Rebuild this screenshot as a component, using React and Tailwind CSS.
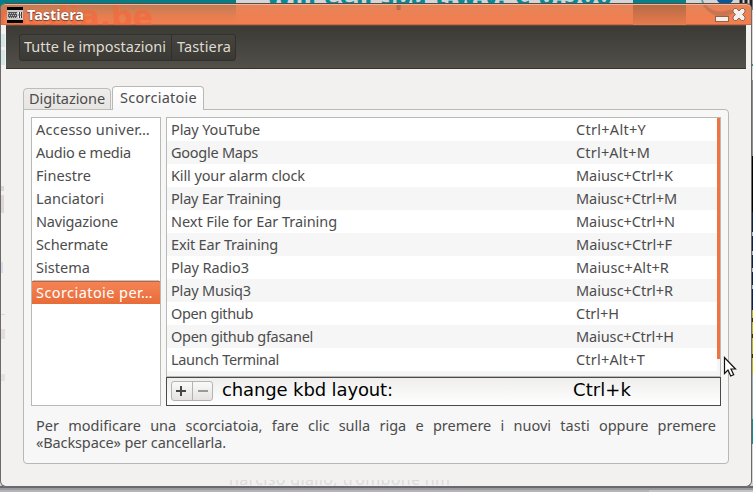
import { useLayoutEffect, useRef } from 'react';

// Spreads the letters of a label so that it takes the given width.
function Label({ w, children, className = '' }) {
  const ref = useRef(null);
  useLayoutEffect(() => {
    const el = ref.current;
    el.style.letterSpacing = '0px';
    const natural = el.getBoundingClientRect().width;
    el.style.letterSpacing = `${(w - natural) / el.textContent.length}px`;
  }, [w]);
  return (
    <span ref={ref} className={`inline-block whitespace-pre ${className}`}>
      {children}
    </span>
  );
}

const categories = [
  ['Accesso univer…', 114],
  ['Audio e media', 95],
  ['Finestre', 55],
  ['Lanciatori', 68],
  ['Navigazione', 82],
  ['Schermate', 72],
  ['Sistema', 54],
];

const shortcuts = [
  ['Play YouTube', 89, 'Ctrl+Alt+Y', 70],
  ['Google Maps', 87, 'Ctrl+Alt+M', 74],
  ['Kill your alarm clock', 134, 'Maiusc+Ctrl+K', 97],
  ['Play Ear Training', 110, 'Maiusc+Ctrl+M', 101],
  ['Next File for Ear Training', 166, 'Maiusc+Ctrl+N', 99],
  ['Exit Ear Training', 107, 'Maiusc+Ctrl+F', 96],
  ['Play Radio3', 78, 'Maiusc+Alt+R', 93],
  ['Play Musiq3', 80, 'Maiusc+Ctrl+R', 97],
  ['Open github', 82, 'Ctrl+H', 43],
  ['Open github gfasanel', 142, 'Maiusc+Ctrl+H', 98],
  ['Launch Terminal', 108, 'Ctrl+Alt+T', 69],
];

function Backdrop() {
  return (
    <svg className="absolute inset-0" width="753" height="492" viewBox="0 0 753 492">
      <rect width="753" height="492" fill="#d5d5d8" />
      <rect width="236" height="20" fill="#007f88" />
      <g fontFamily="DejaVu Sans" fontWeight="bold" fill="#008c98">
        <text x="266" y="5" fontSize="23" textLength="346">Win een spa t.w.v. € 8.500</text>
      </g>
      <rect x="633" width="53" height="10" fill="#00838b" />
      <circle cx="725" cy="-4" r="9" fill="#08579a" />
      <path d="M702 0q2 9 12 12" fill="none" stroke="#58a5a9" strokeWidth="2" />
      <path d="M741 0v10M746 0v10M751 0v10" stroke="#222" strokeWidth="3" />
      <rect x="750" y="64" width="3" height="2" fill="#268f95" />
      <rect x="750" y="80" width="3" height="76" fill="#8c8c8e" />
      <rect x="750" y="156" width="3" height="56" fill="#000" />
      <rect x="750" y="212" width="3" height="98" fill="#08205a" />
      <path d="M750 234h3M750 253h3M750 270h3M750 287h3" stroke="#b7bac4" strokeWidth="4" />
      <rect x="750" y="310" width="3" height="64" fill="#c5b21b" />
      <path d="M750 320h3M750 336h3M750 356h3" stroke="#332d0a" strokeWidth="4" />
      <rect x="750" y="374" width="3" height="45" fill="#9aaead" />
      <rect x="750" y="419" width="3" height="25" fill="#118b99" />
      <rect y="486" width="649" height="6" fill="#b5b4ba" />
      <rect x="649" y="486" width="104" height="6" fill="#c4c4c4" />
      <rect y="486" width="753" height="2" fill="#69696b" />
      <rect y="488" width="753" height="2" fill="#9a9a9e" />
    </svg>
  );
}

// Blurred page content that shows through the translucent window frame.
function FrameGhosts() {
  return (
    <svg className="pointer-events-none absolute inset-0" width="753" height="492" viewBox="0 0 753 492">
      <defs>
        <clipPath id="bar"><rect x="1" y="5" width="750" height="20" /></clipPath>
        <clipPath id="foot"><rect x="1" y="480" width="750" height="6" /></clipPath>
        <linearGradient id="fade" x1="0" y1="0" x2="0" y2="1">
          <stop offset="0" stopColor="#b66c46" />
          <stop offset="1" stopColor="#e87a4b" />
        </linearGradient>
        <linearGradient id="fadeLeft" x1="0" y1="0" x2="0" y2="1">
          <stop offset="0" stopColor="#9d7550" stopOpacity="0.55" />
          <stop offset="1" stopColor="#e87a4b" stopOpacity="0" />
        </linearGradient>
      </defs>
      <g clipPath="url(#bar)">
        <rect x="1" y="5" width="235" height="20" fill="url(#fadeLeft)" />
        <rect x="633" y="5" width="53" height="20" fill="url(#fade)" />
        <text x="-4" y="27" fontFamily="DejaVu Sans" fontWeight="bold" fontSize="30" fill="#f4663a" opacity="0.6" textLength="157">media.be</text>
        <g stroke="#b86f50" strokeWidth="3" fill="none" opacity="0.65">
          <path d="M704 5q10 12 27 6M708 9q12 12 27 1" />
        </g>
        <text x="266" y="5" fontFamily="DejaVu Sans" fontWeight="bold" fontSize="23" fill="#a8694a" opacity="0.8" textLength="346">Win een spa t.w.v. € 8.500</text>
      </g>
      <g clipPath="url(#foot)">
        <text x="229" y="485" fontFamily="Noto Sans" fontSize="16" fill="#dcdbdb" textLength="221">narciso giallo, trombone nm</text>
      </g>
      <rect x="1" y="186" width="3" height="5" fill="#dcd6d6" />
      <rect x="1" y="195" width="3" height="18" fill="#dcd6d6" />
      <rect x="1" y="262" width="2" height="11" fill="#d9dde8" />
      <rect x="1" y="314" width="4" height="1" fill="#ddd9d7" />
      <rect x="1" y="329" width="4" height="10" fill="#e5dddd" />
      <rect x="1" y="374" width="4" height="7" fill="#e5e1e1" />
      <rect x="1" y="34" width="4" height="13" fill="#d4e7e8" />
      <rect x="1" y="50" width="4" height="15" fill="#d4e7e8" />
    </svg>
  );
}

function TitleBar() {
  return (
    <header className="flex h-[22px] items-center rounded-t-[5px] border-t border-[#5b4a40] bg-gradient-to-b from-[#e5845a] to-[#f47d4d] shadow-[inset_0_1px_0_#f0b49a,inset_0_-1px_0_#c76a43]">
      <svg className="relative z-10 ml-[6px]" width="16" height="16" viewBox="0 0 16 16">
        <rect width="16" height="16" fill="#000" />
        <rect y="3" width="16" height="10" fill="#c9c9c9" />
        <rect x="1" y="5" width="9" height="6" fill="#555" />
        <path d="M1 6.5h9M2 8.5h9M1 10.5h9" stroke="#bbb" strokeDasharray="1 1" />
        <path d="M11 5h4v6h-4z" fill="#333" />
        <path d="M11.5 5v6M13.5 5v6" stroke="#eee" />
        <path d="M11 8h4" stroke="#666" />
      </svg>
      <Label w={57} className="relative z-10 -mt-px ml-[4px] text-[14.5px] leading-[18px] font-bold text-white [text-shadow:0_1px_1px_#6d3d28,0_0_1px_#6d3d28]">
        Tastiera
      </Label>
      <svg className="relative z-10 mr-[5px] ml-auto" width="32" height="18" viewBox="0 0 32 18">
        <rect x="1.5" y="10.5" width="13" height="5" fill="#f3efec" stroke="#985f47" />
        <path
          d="M20.5 2.5h2l2.5 2.5 2.5-2.5h2l1.500 1.500v2l-2.500 2.500 2.500 2.500v2l-1.500 1.500h-2L25 12l-2.500 2.500h-2L19 13v-2l2.500-2.500L19 6V4z"
          fill="#f3efec"
          stroke="#985f47"
        />
      </svg>
    </header>
  );
}

function Toolbar() {
  return (
    <nav className="mr-[5px] ml-[5px] h-[44px] border-t border-b border-t-[#5d4a40] border-b-[#35342f] bg-gradient-to-b from-[#3b3a35] to-[#53504a] pt-[8px] pl-[13px]">
      <div className="flex h-[27px] w-[217px] rounded-[3px] border border-[#30302c] bg-gradient-to-b from-[#45443f] to-[#3a3934] leading-[23px] text-[#dfdbd2]">
        <div className="w-[152px] border-r border-[#30302c] pl-[4px]">
          <Label w={142}>Tutte le impostazioni</Label>
        </div>
        <div className="pl-[5px]">
          <Label w={54}>Tastiera</Label>
        </div>
      </div>
    </nav>
  );
}

function Tabs() {
  return (
    <div className="relative z-10 -mb-px flex items-end">
      <div className="h-[22px] w-[88px] rounded-t-[4px] border border-[#bdbcb8] bg-gradient-to-b from-[#eeedeb] to-[#e7e5e2] pl-[5px] leading-[18px]">
        <Label w={76}>Digitazione</Label>
      </div>
      <div className="ml-px h-[24px] w-[92px] rounded-t-[4px] border border-b-0 border-[#b9b8b4] bg-gradient-to-b from-white to-[#f7f7f7] pl-[7px] leading-[21px]">
        <Label w={77}>Scorciatoie</Label>
      </div>
    </div>
  );
}

function CategoryList() {
  return (
    <ul className="h-[289px] w-[130px] border border-[#babab5] bg-white">
      {categories.map(([name, w]) => (
        <li key={name} className="h-[23px] pl-[4px] leading-[23px]">
          <Label w={w}>{name}</Label>
        </li>
      ))}
      <li className="mx-px mt-px h-px bg-[#c5c5c2]" />
      <li className="h-[23px] border-t border-[#b9653f] bg-gradient-to-b from-[#f58355] to-[#e86c38] pl-[4px] leading-[21px] text-white">
        <Label w={117}>Scorciatoie per…</Label>
      </li>
    </ul>
  );
}

function ShortcutList() {
  return (
    <div className="flex h-[260px] w-[555px] overflow-hidden border border-[#babab5] bg-[#f6f6f6]">
      <ul className="flex-1">
        {shortcuts.map(([name, nw, keys, kw], i) => (
          <li key={name} className={`flex h-[23px] leading-[23px] ${i % 2 ? 'bg-[#f6f6f6]' : 'bg-white'}`}>
            <div className="w-[405px] pl-[4px]">
              <Label w={nw}>{name}</Label>
            </div>
            <div className="pl-[4px]">
              <Label w={kw}>{keys}</Label>
            </div>
          </li>
        ))}
      </ul>
      <div className="h-[241px] w-[3px] bg-[#ef7443]" />
    </div>
  );
}

function ListActions() {
  return (
    <div className="flex h-[29px] w-[555px] items-start border border-[#4a4a49] bg-gradient-to-b from-[#efeeed] to-white font-[DejaVu_Sans,sans-serif] text-[18px] leading-[24px] text-black">
      <div className="mt-[3px] ml-[4px] flex h-[20px] w-[42px] rounded-[3px] border border-[#b4b3b0] bg-gradient-to-b from-[#fafafa] to-[#e4e3e1]">
        <div className="flex w-[21px] items-center border-r border-[#b4b3b0] pl-[3px]">
          <svg width="12" height="12" viewBox="0 0 12 12">
            <path d="M1 6h10M6 1v10" stroke="#464643" strokeWidth="2" />
          </svg>
        </div>
        <div className="flex flex-1 items-center justify-center">
          <svg width="12" height="12" viewBox="0 0 12 12">
            <path d="M1 6h10" stroke="#9a9a98" strokeWidth="2" />
          </svg>
        </div>
      </div>
      <div className="ml-[8px] w-[352px] pl-px">
        <Label w={171}>change kbd layout:</Label>
      </div>
      <Label w={58}>Ctrl+k</Label>
    </div>
  );
}

export default function App() {
  return (
    <div className="relative h-[492px] w-[753px] overflow-hidden font-['Noto_Sans','Open_Sans',sans-serif] text-[14.5px] text-[#4c4c4c]">
      <Backdrop />
      <div className="relative pt-[3px]">
        <main className="h-[484px] w-[752px] rounded-[6px] border-r border-b border-l border-[#6b6a69] bg-[#f2f1f0]">
          <TitleBar />
          <Toolbar />
          <div className="pt-[17px] pl-[22px]">
            <Tabs />
            <section className="h-[355px] w-[706px] rounded-[4px] rounded-tl-none border border-[#b9b8b4] bg-[#f7f7f7] pt-[7px] pl-[7px]">
              <div className="flex gap-[5px]">
                <CategoryList />
                <div>
                  <ShortcutList />
                  <ListActions />
                </div>
              </div>
              <div className="mt-[11px] ml-[5px] w-[680px] leading-[17px]">
                <p className="[text-align-last:justify]">
                  Per modificare una scorciatoia, fare clic sulla riga e premere i nuovi tasti oppure premere
                </p>
                <p>
                  <Label w={190}>«Backspace» per cancellarla.</Label>
                </p>
              </div>
            </section>
          </div>
        </main>
      </div>
      <FrameGhosts />
      <svg className="absolute top-[356px] left-[723px]" width="16" height="24" viewBox="0 0 16 24">
        <path d="M1.5 1.5v16l3.500-3.500 2.700 6 3-1.300-2.700-5.700h4.500z" fill="#fff" stroke="#111" strokeWidth="1.2" />
      </svg>
    </div>
  );
}
